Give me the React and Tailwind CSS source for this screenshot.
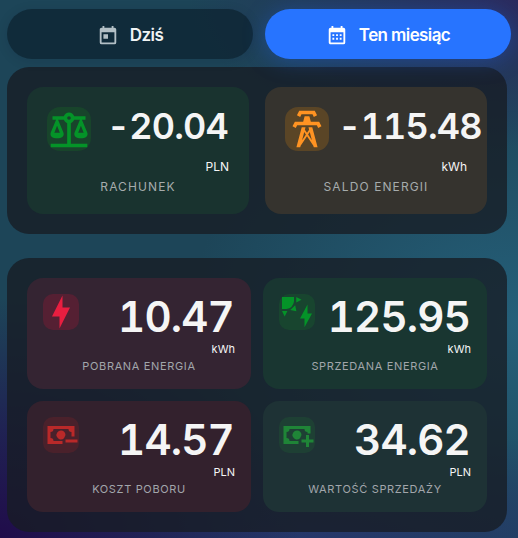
import React from "react";

const ICONS = {
  today:
    "M7,10H12V15H7M19,19H5V8H19M19,3H18V1H16V3H8V1H6V3H5C3.89,3 3,3.9 3,5V19A2,2 0 0,0 5,21H19A2,2 0 0,0 21,19V5A2,2 0 0,0 19,3Z",
  month:
    "M9,10V12H7V10H9M13,10V12H11V10H13M17,10V12H15V10H17M19,3A2,2 0 0,1 21,5V19A2,2 0 0,1 19,21H5C3.89,21 3,20.1 3,19V5A2,2 0 0,1 5,3H6V1H8V3H16V1H18V3H19M19,19V8H5V19H19M9,14V16H7V14H9M13,14V16H11V14H13M17,14V16H15V14H17Z",
  scale:
    "M12,3C10.73,3 9.6,3.8 9.18,5H3V7H4.95L2,14C1.53,16 3,17 5.5,17C8,17 9.56,16 9,14L6.05,7H9.17C9.5,7.85 10.15,8.5 11,8.83V20H2V22H22V20H13V8.82C13.85,8.5 14.5,7.85 14.82,7H17.95L15,14C14.53,16 16,17 18.5,17C21,17 22.56,16 22,14L19.05,7H21V5H14.83C14.4,3.8 13.27,3 12,3M12,5A1,1 0 0,1 13,6A1,1 0 0,1 12,7A1,1 0 0,1 11,6A1,1 0 0,1 12,5M5.5,10.25L7,14H4L5.5,10.25M18.5,10.25L20,14H17L18.5,10.25Z",
  tower:
    "M8.28,5.45L6.5,4.55L7.76,2H16.23L17.5,4.55L15.72,5.44L15,4H9L8.28,5.45M18.62,8H14.09L13.3,5H10.7L9.91,8H5.38L4.1,10.55L5.89,11.44L6.62,10H17.38L18.1,11.45L19.89,10.56L18.62,8M17.77,22H15.7L15.46,21.1L12,15.9L8.53,21.1L8.3,22H6.23L9.12,11H11.19L10.83,12.35L12,14.1L13.16,12.35L12.81,11H14.88L17.77,22M11.4,15L10.5,13.65L9.32,18.13L11.4,15M14.68,18.12L13.5,13.64L12.6,15L14.68,18.12Z",
  bolt: "M11 15H6L13 1V9H18L11 23V15Z",
  solar:
    "M2 2H10V5A6 6 0 0 1 5 10H2ZM11.5 2L15 3.8L11.5 5.6ZM2 11.4H5.6L3.8 15ZM10.8 7.5L11.6 11.5L7.5 10.7ZM19 7V13H22L17 22.2V16.3H14Z",
  cashMinus:
    "M15 15H23V17H15ZM3 6H21V13H19V10A2 2 0 0 1 17 8H7A2 2 0 0 1 5 10V14A2 2 0 0 1 7 16H13V18H3ZM12 9A3 3 0 0 1 15 12L14 14.2A3 3 0 1 1 12 9Z",
  cashPlus:
    "M18 12H20V15H23V17H20V20H18V17H15V15H18ZM3 6H21V11H19V10A2 2 0 0 1 17 8H7A2 2 0 0 1 5 10V14A2 2 0 0 1 7 16H13V18H3ZM12 9A3 3 0 0 1 15 12L14 14.2A3 3 0 1 1 12 9Z",
};

function Icon({ d, className }) {
  return (
    <svg viewBox="0 0 24 24" className={className} fill="currentColor" fillRule="evenodd">
      <path d={d} />
    </svg>
  );
}

function Tab({ icon, label, active }) {
  return (
    <button
      className={
        active
          ? "flex h-[50px] w-[246px] items-center justify-center gap-[11px] rounded-full bg-[#2774ff] text-white shadow-[0_2px_22px_rgba(28,100,230,0.38)]"
          : "flex h-[50px] w-[246px] items-center justify-center gap-[11px] rounded-full bg-[rgba(8,26,38,0.6)] text-[#f0f3f4] shadow-[0_2px_12px_rgba(0,20,40,0.12)]"
      }
    >
      <Icon d={icon} className={active ? "mt-[3px] size-[22px]" : "mt-[3px] size-[22px] text-[#b3c0c6]"} />
      <span className="pt-[2px] text-[17px] leading-6 font-semibold tracking-[-0.6px]">{label}</span>
    </button>
  );
}

function SummaryCard({ icon, value, unit, label, card, badge }) {
  return (
    <div className={`flex h-[127px] w-[222px] flex-col rounded-[16px] p-5 ${card}`}>
      <div className="flex h-[44px] gap-[9px]">
        <div className={`flex size-[44px] shrink-0 items-center justify-center rounded-[13px] ${badge}`}>
          <Icon d={icon} className="size-[44px]" />
        </div>
        <div className="min-w-0 flex-1">
          <div className="w-max min-w-full pr-px text-right text-[36px] leading-[38px] font-semibold tracking-[-0.8px] whitespace-nowrap text-[#f5f5f5] tabular-nums">
            {value}
          </div>
        </div>
      </div>
      <div className="mt-[7px] text-right text-[12px] leading-[18px] text-[#f5f5f5]">{unit}</div>
      <div className="mt-[2px] text-center text-[12px] leading-[18px] tracking-[1.1px] text-[#a6acac]">{label}</div>
    </div>
  );
}

function DetailCard({ icon, value, unit, label, card, badge }) {
  return (
    <div className={`flex h-[111px] w-[224px] flex-col rounded-[16px] px-4 pt-4 ${card}`}>
      <div className="flex h-[47px] shrink-0 justify-between">
        <div className={`flex size-[36px] shrink-0 items-center justify-center rounded-[10px] ${badge}`}>
          <Icon d={icon} className="size-[36px]" />
        </div>
        <span className="pt-px pr-px text-[42px] leading-[44px] font-semibold tracking-[-0.8px] whitespace-nowrap text-[#f5f5f5] tabular-nums">
          {value}
        </span>
      </div>
      <div className="text-right text-[11px] leading-4 text-[#f5f5f5]">{unit}</div>
      <div className="mt-px text-center text-[11px] leading-4 tracking-[0.65px] text-[#a2a6ab]">{label}</div>
    </div>
  );
}

export default function App() {
  return (
    <div className="h-[538px] w-[518px] overflow-hidden bg-[#1d4558] bg-[radial-gradient(ellipse_300px_240px_at_0%_100%,#200c4a_0%,rgba(32,28,82,0.85)_45%,transparent_100%),radial-gradient(ellipse_330px_150px_at_100%_0%,#2b2b5e_0%,transparent_100%),radial-gradient(ellipse_500px_110px_at_60%_100%,#26376a_0%,transparent_100%),radial-gradient(ellipse_330px_250px_at_100%_60%,#25607a_0%,transparent_100%)] pt-[9px] pl-[7px] font-['Inter',sans-serif]">
      <div className="flex gap-3">
        <Tab icon={ICONS.today} label="Dziś" />
        <Tab icon={ICONS.month} label="Ten miesiąc" active />
      </div>
      <section className="mt-2 flex h-[167px] w-[500px] gap-4 rounded-[22px] bg-[rgba(23,28,36,0.78)] p-5">
        <SummaryCard icon={ICONS.scale} value="-20.04" unit="PLN" label="RACHUNEK" card="bg-[#19332f]" badge="bg-[#18442b] text-[#049328]" />
        <SummaryCard icon={ICONS.tower} value="-115.48" unit="kWh" label="SALDO ENERGII" card="bg-[#35332e]" badge="bg-[#5a4526] text-[#ff9322]" />
      </section>
      <section className="mt-6 grid h-[274px] w-[500px] grid-cols-[224px_224px] grid-rows-[111px_111px] gap-3 rounded-[22px] bg-[rgba(23,28,36,0.78)] p-5">
        <DetailCard icon={ICONS.bolt} value="10.47" unit="kWh" label="POBRANA ENERGIA" card="bg-[#342432]" badge="bg-[#552033] text-[#e91e40]" />
        <DetailCard icon={ICONS.solar} value="125.95" unit="kWh" label="SPRZEDANA ENERGIA" card="bg-[#193631]" badge="bg-[#18452f] text-[#049328]" />
        <DetailCard icon={ICONS.cashMinus} value="14.57" unit="PLN" label="KOSZT POBORU" card="bg-[#33212d]" badge="bg-[#4a212b] text-[#ba2929]" />
        <DetailCard icon={ICONS.cashPlus} value="34.62" unit="PLN" label="WARTOŚĆ SPRZEDAŻY" card="bg-[#1e3235]" badge="bg-[#1e4034] text-[#1f8537]" />
      </section>
    </div>
  );
}
